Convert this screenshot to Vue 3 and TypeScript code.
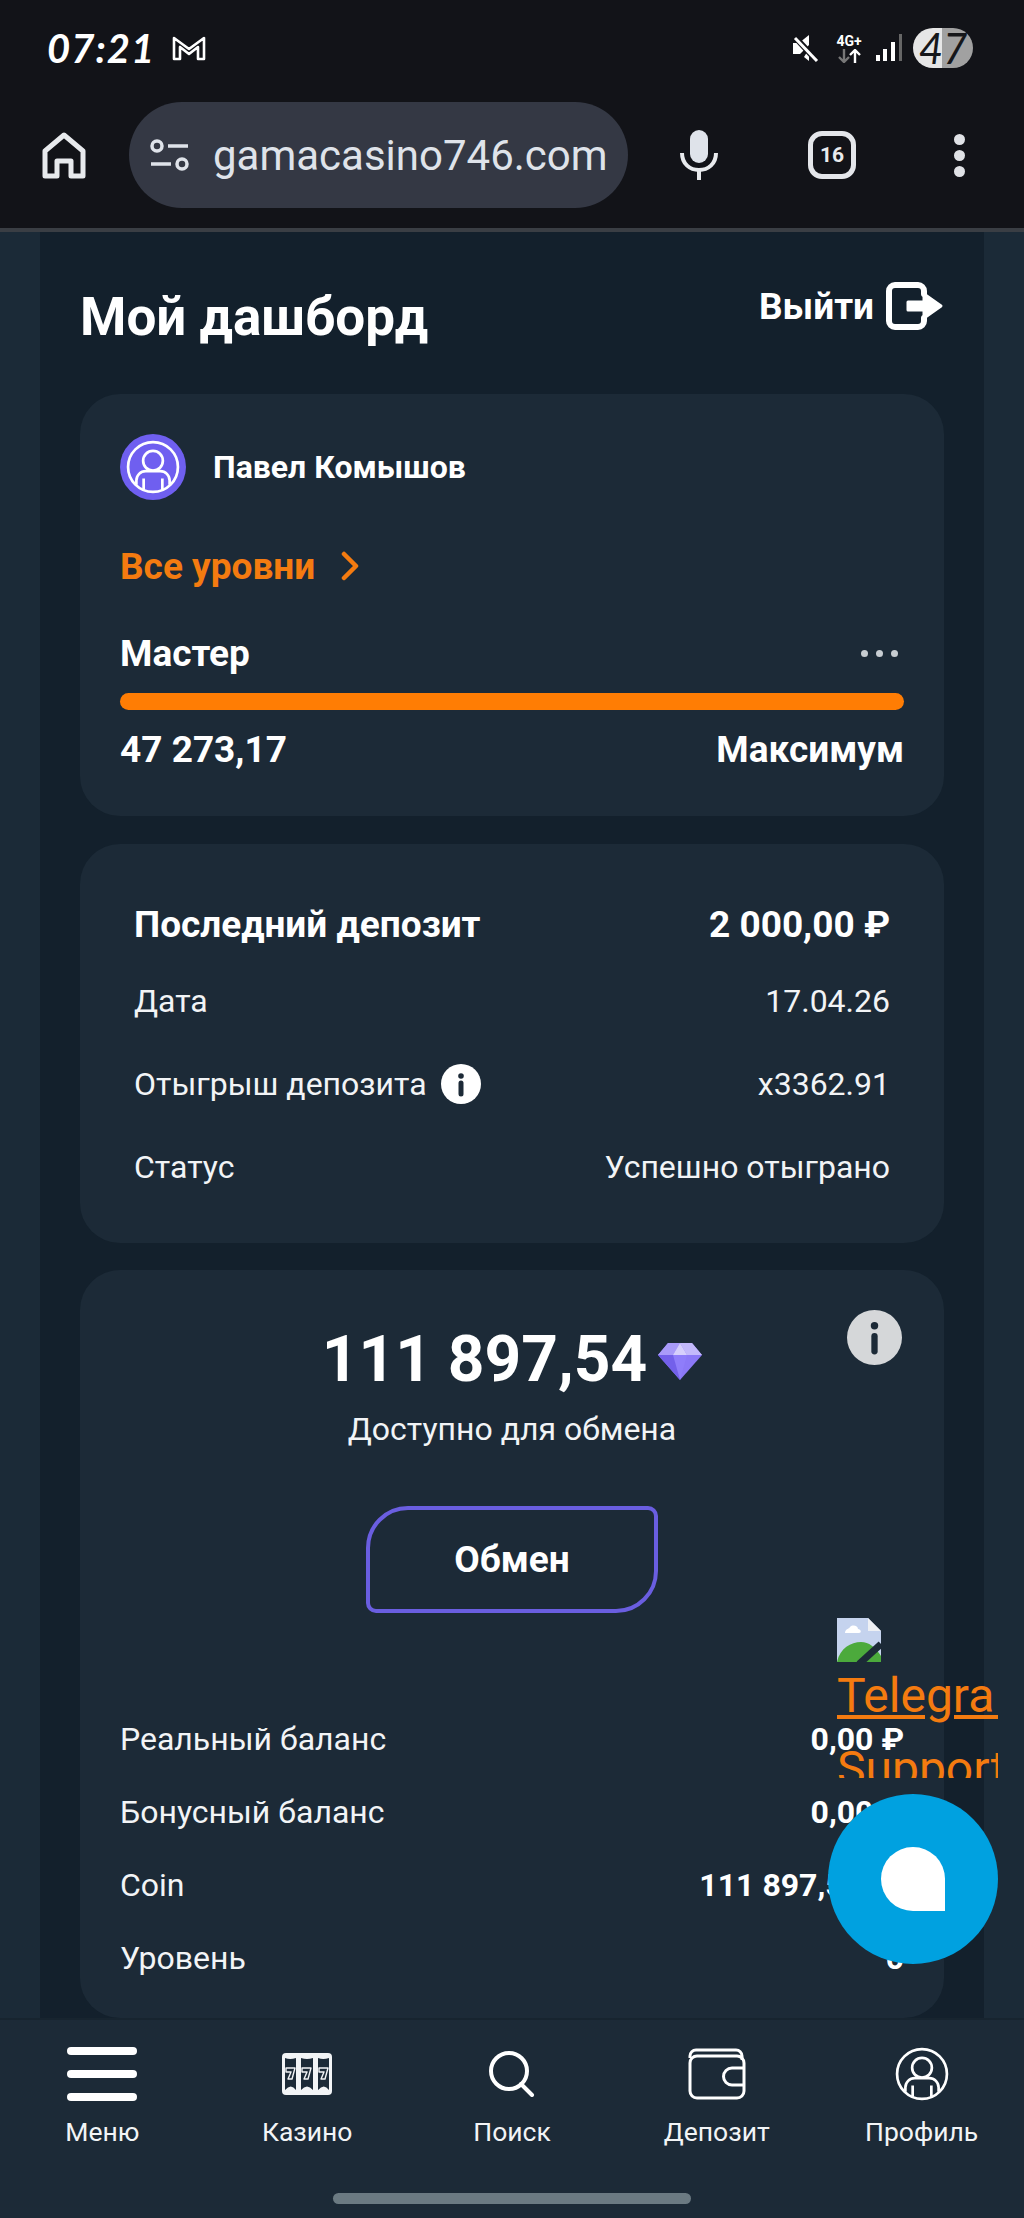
<script setup lang="ts">
const rows = [
  { label: 'Реальный баланс', value: '0,00 ₽', gem: false },
  { label: 'Бонусный баланс', value: '0,00 ₽', gem: false },
  { label: 'Coin', value: '111 897,54', gem: true },
  { label: 'Уровень', value: '0', gem: false }
]
</script>

<template>
  <div class="screen">
    <header class="browser">
      <div class="status">
        <div class="status-left">
          <span class="time">07:21</span>
          <svg width="34" height="26" viewBox="0 0 34 26" fill="none" stroke="#fff" stroke-width="2.6" stroke-linejoin="round">
            <path d="M2 24V3l15 11L32 3v21h-6V12l-9 7-9-7v12z" />
          </svg>
        </div>
        <div class="status-right">
          <svg width="27" height="28" viewBox="0 0 27 28">
            <path d="M1 9h6l10-8v10l-9 9H1z M17 15v12l-5-4z" fill="#fff" />
            <path d="M2 2l23 25" stroke="#121318" stroke-width="6" />
            <path d="M3 4l22 23" stroke="#fff" stroke-width="3" />
          </svg>
          <div class="net">
            <span>4G+</span>
            <svg width="24" height="14" viewBox="0 0 24 14" fill="none" stroke-width="2.4">
              <path d="M7 0v12M2 8l5 5 5-5" stroke="#777" />
              <path d="M18 14V2M13 6l5-5 5 5" stroke="#fff" />
            </svg>
          </div>
          <svg class="signal" width="26" height="28" viewBox="0 0 26 28">
            <rect x="0" y="21" width="4" height="6" fill="#fff" />
            <rect x="7" y="15" width="4" height="12" fill="#fff" />
            <rect x="15" y="8" width="4" height="19" fill="#fff" />
            <rect x="23" y="0" width="3" height="27" fill="#666" />
          </svg>
          <div class="battery">47</div>
        </div>
      </div>
      <div class="toolbar">
        <svg class="home" width="44" height="48" viewBox="0 0 44 48" fill="none" stroke="#e8eaed" stroke-width="5" stroke-linejoin="round">
          <path d="M3 45V20L22 4l19 16v25H29V30H15v15z" />
        </svg>
        <div class="url">
          <svg width="40" height="32" viewBox="0 0 40 32" fill="none" stroke="#dfe3ea" stroke-width="3.5">
            <circle cx="7" cy="7" r="5" />
            <path d="M18 7h20M1 25h20" />
            <circle cx="32" cy="25" r="5" />
          </svg>
          <span>gamacasino746.com</span>
        </div>
        <svg class="mic" width="38" height="50" viewBox="0 0 38 50">
          <rect x="10" y="0" width="18" height="33" rx="9" fill="#dfe3ea" />
          <path d="M2 23c0 11 8 17 17 17s17-6 17-17M19 40v10" fill="none" stroke="#e8eaed" stroke-width="4" />
        </svg>
        <div class="tabs">16</div>
        <div class="kebab"><i /><i /><i /></div>
      </div>
    </header>

    <main class="page">
      <div class="column">
        <div class="head">
          <h1>Мой дашборд</h1>
          <div class="logout">
            <span>Выйти</span>
            <svg width="58" height="48" viewBox="0 0 58 48" fill="none" stroke="#fff" stroke-width="6" stroke-linejoin="round" stroke-linecap="round">
              <path d="M38 12V9a6 6 0 0 0-6-6H9a6 6 0 0 0-6 6v30a6 6 0 0 0 6 6h23a6 6 0 0 0 6-6v-3" />
              <path d="M22 20h16v-8l17 12-17 12v-8H22z" fill="#fff" stroke-width="3" />
            </svg>
          </div>
        </div>

        <section class="card level">
          <div class="user">
            <div class="avatar">
              <svg width="54" height="54" viewBox="0 0 52 52" fill="none" stroke="#fff" stroke-width="2.6">
                <circle cx="26" cy="26" r="24" />
                <circle cx="26" cy="20" r="9.5" />
                <path d="M10 43v-4a9 9 0 0 1 9-9h14a9 9 0 0 1 9 9v4M17 37v11M35 37v11" />
              </svg>
            </div>
            <span>Павел Комышов</span>
          </div>
          <div class="all-levels">
            <span>Все уровни</span>
            <svg width="20" height="30" viewBox="0 0 20 30" fill="none" stroke="#f47b10" stroke-width="4.5" stroke-linecap="round" stroke-linejoin="round">
              <path d="M4 3l12 12L4 27" />
            </svg>
          </div>
          <div class="level-row title-row">
            <span>Мастер</span>
            <div class="dots"><i /><i /><i /></div>
          </div>
          <div class="bar" />
          <div class="level-row values">
            <span>47 273,17</span>
            <span>Максимум</span>
          </div>
        </section>

        <section class="card deposit">
          <div class="deposit-head">
            <span>Последний депозит</span>
            <span>2 000,00 ₽</span>
          </div>
          <div class="deposit-row">
            <span>Дата</span>
            <span>17.04.26</span>
          </div>
          <div class="deposit-row">
            <span class="with-info">
              Отыгрыш депозита
              <svg width="40" height="40" viewBox="0 0 40 40">
                <circle cx="20" cy="20" r="20" fill="#fff" />
                <circle cx="20" cy="12" r="2.8" fill="#1c2a37" />
                <path d="M20 19v11" stroke="#1c2a37" stroke-width="5" stroke-linecap="round" />
              </svg>
            </span>
            <span>x3362.91</span>
          </div>
          <div class="deposit-row">
            <span>Статус</span>
            <span>Успешно отыграно</span>
          </div>
        </section>

        <section class="card exchange">
          <svg class="info-big" width="55" height="55" viewBox="0 0 40 40">
            <circle cx="20" cy="20" r="20" fill="#d5d7d9" />
            <circle cx="20" cy="11.5" r="2.7" fill="#1c2a37" />
            <path d="M20 19v11" stroke="#1c2a37" stroke-width="4.6" stroke-linecap="round" />
          </svg>
          <div class="amount">
            <span>111 897,54</span>
            <svg width="44" height="37" viewBox="0 0 44 37">
              <polygon points="10,0 34,0 44,12 22,37 0,12" fill="#8b78f7" />
              <polygon points="10,0 22,0 15,12 0,12" fill="#a99bf9" />
              <polygon points="22,0 34,0 44,12 29,12" fill="#c3b9fb" />
              <polygon points="22,0 29,12 15,12" fill="#d6cffc" />
              <polygon points="15,12 29,12 22,37" fill="#8f7dfa" />
              <polygon points="0,12 15,12 22,37" fill="#7360ea" />
            </svg>
          </div>
          <p class="available">Доступно для обмена</p>
          <button class="swap">Обмен</button>
          <div class="balances">
            <div v-for="row in rows" :key="row.label" class="balance">
              <span>{{ row.label }}</span>
              <b>
                {{ row.value }}
                <svg v-if="row.gem" width="34" height="28" viewBox="0 0 44 37">
                  <polygon points="10,0 34,0 44,12 22,37 0,12" fill="#8b78f7" />
                </svg>
              </b>
            </div>
          </div>
        </section>
      </div>
    </main>

    <nav class="tabbar">
      <div class="tab">
        <div class="tab-icon burger"><i /><i /><i /></div>
        <span>Меню</span>
      </div>
      <div class="tab">
        <div class="tab-icon">
          <svg width="50" height="42" viewBox="0 0 50 42">
            <rect width="50" height="42" rx="4" fill="#f2f4f6" />
            <g fill="#1c2a37">
              <path d="M3 5q5 2 11 0v32q-5-7-11 0z" />
              <path d="M19 5q6 2 12 0v32q-6-7-12 0z" />
              <path d="M36 5q5 2 11 0v32q-5-7-11 0z" />
            </g>
            <g fill="none" stroke="#f2f4f6" stroke-width="1.4" stroke-linejoin="round">
              <path d="M4 15h9l-3 11H6l3-7H4z" />
              <path d="M20 15h9l-3 11h-4l3-7h-5z" />
              <path d="M37 15h9l-3 11h-4l3-7h-5z" />
            </g>
          </svg>
        </div>
        <span>Казино</span>
      </div>
      <div class="tab">
        <div class="tab-icon">
          <svg width="46" height="46" viewBox="0 0 46 46" fill="none" stroke="#fff" stroke-width="4" stroke-linecap="round">
            <circle cx="20" cy="20" r="18" />
            <path d="M32 33l11 11" />
          </svg>
        </div>
        <span>Поиск</span>
      </div>
      <div class="tab">
        <div class="tab-icon">
          <svg width="58" height="52" viewBox="0 0 58 52" fill="none" stroke="#fff" stroke-width="3">
            <path d="M2 10V8a6 6 0 0 1 6-6h40a6 6 0 0 1 6 6v4" />
            <rect x="2" y="8" width="54" height="42" rx="7" />
            <path d="M56 20H44a8 8 0 0 0 0 17h12" />
          </svg>
        </div>
        <span>Депозит</span>
      </div>
      <div class="tab">
        <div class="tab-icon">
          <svg width="54" height="54" viewBox="0 0 52 52" fill="none" stroke="#fff" stroke-width="2.6">
            <circle cx="26" cy="26" r="24" />
            <circle cx="26" cy="20" r="9.5" />
            <path d="M10 43v-4a9 9 0 0 1 9-9h14a9 9 0 0 1 9 9v4M17 37v11M35 37v11" />
          </svg>
        </div>
        <span>Профиль</span>
      </div>
    </nav>
    <div class="gesture" />

    <div class="telegram">
      <svg width="44" height="44" viewBox="0 0 44 44">
        <path d="M0 0h31l13 13v31H0z" fill="#c5d3ee" />
        <path d="M31 0l13 13H31z" fill="#eef0f4" />
        <path d="M8 15c0-4 4-4 5-6 3-3 8-1 8 2 3 0 4 4 1 4z" fill="#fff" />
        <path d="M0 44c3-14 14-20 24-20 8 0 14 5 20 14v6z" fill="#4caa3c" />
        <path d="M22 46L44 26" stroke="#1c2a37" stroke-width="7" />
      </svg>
      <a>Telegra&nbsp;</a>
      <a class="support">Support</a>
    </div>
    <div class="chat"><i /></div>
  </div>
</template>

<style>
html,
body {
  margin: 0;
  background: #1b2a37;
}
</style>

<style scoped>
.screen {
  position: relative;
  display: flex;
  flex-direction: column;
  width: 1024px;
  height: 2218px;
  overflow: hidden;
  background: #1b2a37;
  color: #fff;
  font-family: Roboto, "Liberation Sans", sans-serif;
}

.browser {
  flex: none;
  height: 228px;
  background: #121318;
  border-bottom: 4px solid #3a3e44;
}

.status {
  display: flex;
  justify-content: space-between;
  align-items: center;
  height: 40px;
  padding: 28px 51px 0 47px;
}

.status-left {
  display: flex;
  align-items: center;
  gap: 17px;
}

.time {
  font-family: Lato, sans-serif;
  font-style: italic;
  font-weight: 700;
  font-size: 40px;
  line-height: 40px;
  letter-spacing: 1px;
}

.status-right {
  display: flex;
  align-items: center;
  gap: 14px;
}

.net {
  display: flex;
  flex-direction: column;
  align-items: center;
  width: 32px;
  font-size: 14px;
  font-weight: 700;
  line-height: 14px;
}

.net svg {
  display: block;
  margin-top: 1px;
}

.signal {
  margin-left: -3px;
}

.battery {
  width: 60px;
  height: 40px;
  margin-left: -3px;
  border-radius: 20px;
  background: linear-gradient(90deg, #e6e6e6 0 48%, #a1a1a1 48% 100%);
  color: #16171a;
  font-family: Lato, sans-serif;
  font-style: italic;
  font-weight: 400;
  font-size: 42px;
  line-height: 40px;
  text-align: center;
}

.toolbar {
  display: flex;
  align-items: center;
  height: 106px;
  margin-top: 34px;
  padding-left: 42px;
}

.url {
  display: flex;
  align-items: center;
  gap: 23px;
  width: 499px;
  height: 106px;
  margin-left: 43px;
  padding-left: 21px;
  box-sizing: border-box;
  border-radius: 53px;
  background: #343844;
  color: #dfe3ea;
  font-size: 42px;
  white-space: nowrap;
}

.mic {
  margin-left: 52px;
}

.tabs {
  width: 48px;
  height: 48px;
  margin-left: 90px;
  box-sizing: border-box;
  border: 5px solid #e4e6ea;
  border-radius: 14px;
  color: #e8eaed;
  font-size: 21px;
  font-weight: 700;
  line-height: 38px;
  text-align: center;
}

.kebab {
  display: flex;
  flex-direction: column;
  gap: 5px;
  margin-left: 98px;
}

.kebab i {
  width: 11px;
  height: 11px;
  border-radius: 50%;
  background: #e0e2e6;
}

.page {
  flex: 1;
  min-height: 0;
  overflow: hidden;
}

.column {
  height: 100%;
  margin: 0 40px;
  padding: 0 40px;
  background: #13202c;
}

.head {
  display: flex;
  justify-content: space-between;
  height: 162px;
}

h1 {
  margin: 0;
  padding-top: 60px;
  font-size: 53px;
  font-weight: 700;
  line-height: 50px;
}

.logout {
  display: flex;
  gap: 12px;
  height: 48px;
  margin-top: 50px;
  align-items: center;
  font-size: 37px;
  font-weight: 700;
}

.card {
  box-sizing: border-box;
  border-radius: 40px;
  background: #1c2a37;
}

.level {
  height: 422px;
  margin-bottom: 28px;
  padding: 40px;
}

.user {
  display: flex;
  align-items: center;
  gap: 27px;
  height: 66px;
  font-size: 32px;
  font-weight: 700;
}

.avatar {
  display: flex;
  align-items: center;
  justify-content: center;
  width: 66px;
  height: 66px;
  border-radius: 50%;
  background: #6f5ff0;
}

.all-levels {
  display: flex;
  align-items: center;
  gap: 25px;
  height: 40px;
  margin-top: 46px;
  color: #f47b10;
  font-size: 37px;
  font-weight: 700;
}

.level-row {
  display: flex;
  justify-content: space-between;
  align-items: center;
  height: 40px;
  font-size: 37px;
  font-weight: 700;
}

.title-row {
  margin-top: 47px;
}

.dots {
  display: flex;
  gap: 8px;
  margin-right: 6px;
}

.dots i {
  width: 7px;
  height: 7px;
  border-radius: 50%;
  background: #c8cdd2;
}

.bar {
  height: 17px;
  margin-top: 20px;
  border-radius: 9px;
  background: #ff7d04;
}

.values {
  margin-top: 19px;
}

.deposit {
  height: 399px;
  margin-bottom: 27px;
  padding: 60px 54px 0;
}

.deposit-head,
.deposit-row {
  display: flex;
  justify-content: space-between;
  align-items: center;
  height: 40px;
}

.deposit-head {
  margin-bottom: 37px;
  font-size: 37px;
  font-weight: 700;
}

.deposit-row {
  margin-bottom: 43px;
  font-size: 32px;
  color: #f2f4f6;
}

.with-info {
  display: flex;
  align-items: center;
  gap: 14px;
}

.exchange {
  position: relative;
  height: 748px;
  padding: 50px 40px 0;
}

.info-big {
  position: absolute;
  top: 40px;
  right: 42px;
}

.amount {
  display: flex;
  justify-content: center;
  align-items: center;
  gap: 11px;
  height: 80px;
  font-size: 64px;
  font-weight: 700;
  line-height: 80px;
}

.amount svg {
  margin-top: 2px;
}

.available {
  height: 40px;
  margin: 9px 0 0;
  font-size: 32px;
  line-height: 40px;
  text-align: center;
  color: #f2f4f6;
}

.swap {
  display: block;
  width: 292px;
  height: 107px;
  margin: 57px auto 0;
  padding: 0;
  box-sizing: border-box;
  border: 4px solid #6a5ee0;
  border-radius: 42px 10px 42px 10px;
  background: transparent;
  color: #fff;
  font-family: inherit;
  font-size: 37px;
  font-weight: 700;
}

.balances {
  display: flex;
  flex-direction: column;
  gap: 33px;
  margin-top: 106px;
}

.balance {
  display: flex;
  justify-content: space-between;
  align-items: center;
  height: 40px;
  font-size: 32px;
  color: #f2f4f6;
}

.balance b {
  color: #fff;
  font-weight: 700;
}

.tabbar {
  flex: none;
  display: grid;
  grid-template-columns: repeat(5, 1fr);
  height: 198px;
  border-top: 2px solid #17242f;
  background: #1c2a37;
}

.tab {
  display: flex;
  flex-direction: column;
  align-items: center;
  padding-top: 19px;
  font-size: 26.5px;
  line-height: 36px;
  color: #f2f4f6;
}

.tab-icon {
  display: flex;
  align-items: center;
  justify-content: center;
  height: 70px;
  margin-bottom: 5px;
}

.burger {
  flex-direction: column;
  gap: 15px;
}

.burger i {
  width: 70px;
  height: 8px;
  border-radius: 4px;
  background: #fff;
}

.gesture {
  position: absolute;
  left: 333px;
  bottom: 14px;
  width: 358px;
  height: 11px;
  border-radius: 6px;
  background: #6b7a82;
}

.telegram {
  position: absolute;
  top: 1618px;
  left: 837px;
  width: 161px;
  height: 160px;
  overflow: hidden;
  color: #f47b10;
  font-size: 48px;
  line-height: 73px;
  white-space: nowrap;
}

.telegram svg {
  display: block;
  margin-bottom: -3px;
}

.telegram a {
  display: block;
  text-decoration: underline;
}

.chat {
  position: absolute;
  top: 1794px;
  left: 828px;
  display: flex;
  align-items: center;
  justify-content: center;
  width: 170px;
  height: 170px;
  border-radius: 50%;
  background: #00a1e0;
}

.chat i {
  width: 64px;
  height: 64px;
  border-radius: 50% 50% 0 50%;
  background: #fff;
}
</style>
